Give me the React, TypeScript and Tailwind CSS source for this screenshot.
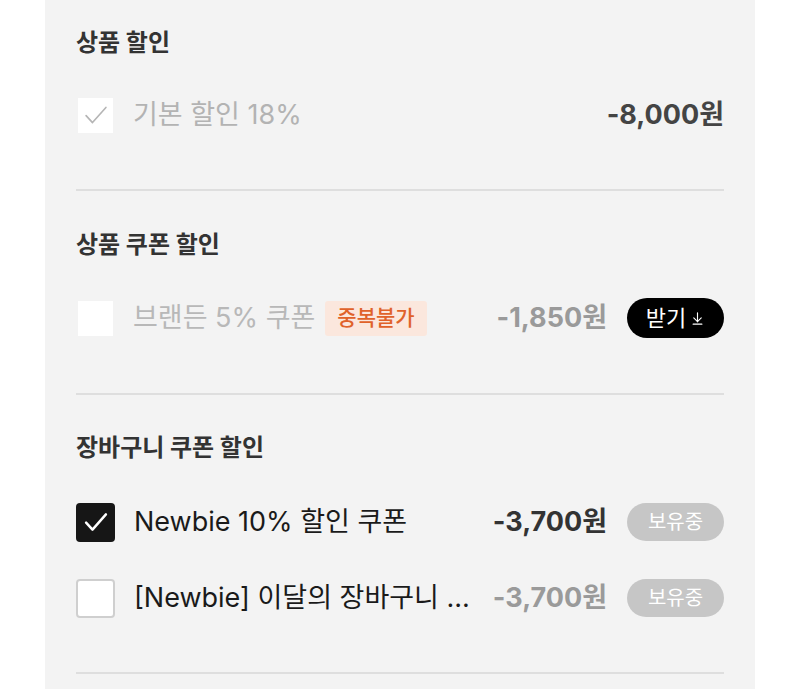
import { ArrowDownToLine } from "lucide-react";

const font = { fontFamily: 'Inter, "Noto Sans CJK KR", sans-serif' };

const Check = ({ state }: { state: "disabled" | "off-disabled" | "on" | "off" }) => {
    if (state === "on") {
        return (
            <div className="w-[39px] h-[39px] shrink-0 rounded-[4px] bg-[#161616] flex items-center justify-center">
                <svg width="28" height="28" viewBox="0 0 24 24" fill="none" stroke="white" strokeWidth="2.1" strokeLinecap="round" strokeLinejoin="round">
                    <path d="M3.5 12.5l5.5 6 11.5-13" />
                </svg>
            </div>
        );
    }
    if (state === "off") {
        return <div className="w-[39px] h-[39px] shrink-0 rounded-[4px] bg-white border-2 border-[#cfcfcf]" />;
    }
    return (
        <div className="w-[39px] h-[39px] shrink-0 flex items-center justify-center">
            <div className="w-[35px] h-[35px] bg-white flex items-center justify-center">
                {state === "disabled" && (
                    <svg width="28" height="28" viewBox="0 0 24 24" fill="none" stroke="#b5b5b5" strokeWidth="1.4" strokeLinecap="round" strokeLinejoin="round">
                        <path d="M3.5 12.5l5.5 6 11.5-13" />
                    </svg>
                )}
            </div>
        </div>
    );
};

const Heading = ({ children }: { children: string }) => (
    <h2 className="text-[24px] leading-[32px] font-bold text-[#333]">{children}</h2>
);

const Owned = () => (
    <div className="w-[97px] h-[38px] shrink-0 rounded-full bg-[#c6c6c6] text-white text-[20px] flex items-center justify-center">
        보유중
    </div>
);

const App = () => {
    return (
        <div className="w-[800px] h-[689px] bg-white overflow-hidden" style={font}>
            <div className="mx-[45px] h-full bg-[#f3f3f3] px-[31px]">
                <section className="pt-[27px] pb-[54px] border-b-2 border-[#dedede]">
                    <Heading>상품 할인</Heading>
                    <div className="mt-[36px] h-[40px] flex items-center">
                        <Check state="disabled" />
                        <span className="ml-[18px] text-[27px] text-[#b3b3b3]">기본 할인 18%</span>
                        <span className="ml-auto text-[27px] font-bold text-[#444]">-8,000원</span>
                    </div>
                </section>

                <section className="pt-[38px] pb-[55px] border-b-2 border-[#dedede]">
                    <Heading>상품 쿠폰 할인</Heading>
                    <div className="mt-[37px] h-[40px] flex items-center">
                        <Check state="off-disabled" />
                        <span className="ml-[18px] text-[27px] text-[#b8b8b8]">브랜든 5% 쿠폰</span>
                        <span className="ml-[10px] h-[35px] px-[12px] rounded-[3px] bg-[#fbe7dd] text-[#e0622a] text-[21px] font-medium flex items-center">
                            중복불가
                        </span>
                        <span className="ml-auto text-[27px] font-bold text-[#9a9a9a]">-1,850원</span>
                        <button className="ml-[20px] w-[97px] h-[40px] rounded-full bg-black text-white text-[22px] flex items-center justify-center gap-[4px]">
                            받기
                            <ArrowDownToLine size={15} strokeWidth={1.8} />
                        </button>
                    </div>
                </section>

                <section className="pt-[37px] pb-[54px] border-b-2 border-[#dedede]">
                    <Heading>장바구니 쿠폰 할인</Heading>
                    <div className="mt-[38px] flex flex-col gap-[36px]">
                        <div className="h-[40px] flex items-center">
                            <Check state="on" />
                            <span className="ml-[19px] text-[27px] text-[#1a1a1a]">Newbie 10% 할인 쿠폰</span>
                            <span className="ml-auto text-[27px] font-bold text-[#333]">-3,700원</span>
                            <div className="ml-[20px]"><Owned /></div>
                        </div>
                        <div className="h-[40px] flex items-center">
                            <Check state="off" />
                            <span className="ml-[19px] text-[27px] text-[#1a1a1a] whitespace-nowrap">[Newbie] 이달의 장바구니 ...</span>
                            <span className="ml-auto text-[27px] font-bold text-[#9a9a9a]">-3,700원</span>
                            <div className="ml-[20px]"><Owned /></div>
                        </div>
                    </div>
                </section>
            </div>
        </div>
    );
};

export default App;
